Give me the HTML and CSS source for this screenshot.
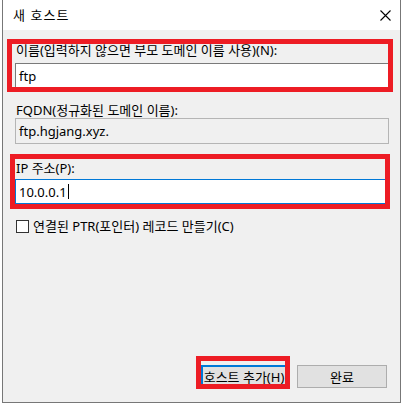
FILE: index.html
```html
<!DOCTYPE html>
<html lang="ko">
<head>
<meta charset="utf-8">
<title>새 호스트</title>
<link rel="stylesheet" href="styles.css">
</head>
<body>
<div class="window">
  <div class="titlebar">
    <span class="title">새 호스트</span>
    <svg class="close" width="11" height="11" viewBox="0 0 11 11"><path d="M0.5 0.5 L10.5 10.5 M10.5 0.5 L0.5 10.5" stroke="#000" stroke-width="1.1" fill="none"/></svg>
  </div>
  <div class="content">
    <div class="label first">이름(입력하지 않으면 부모 도메인 이름 사용)(N):</div>
    <div class="input">ftp</div>
    <div class="label fqdn">FQDN(정규화된 도메인 이름):</div>
    <div class="readonly">ftp.hgjang.xyz.</div>
    <div class="label ip">IP 주소(P):</div>
    <div class="input focused">10.0.0.1<span class="caret"></span></div>
    <div class="check-row"><span class="checkbox"></span><span class="check-label">연결된 PTR(포인터) 레코드 만들기(C)</span></div>
    <div class="buttons">
      <button class="btn default">호스트 추가(H)</button>
      <button class="btn done">완료</button>
    </div>
  </div>
  <div class="mark mark-name"></div>
  <div class="mark mark-ip"></div>
  <div class="mark mark-btn"></div>
</div>
</body>
</html>
```
FILE: styles.css
```css
html, body {
  margin: 0;
  padding: 0;
  background: #ffffff;
}
body {
  font-family: "Noto Sans", "Noto Sans CJK KR", sans-serif;
  font-size: 13px;
  color: #000;
}
.window {
  position: relative;
  margin-left: 2px;
  width: 397px;
  height: 402px;
  border-left: 1px solid #777;
  border-right: 1px solid #777;
  border-bottom: 1px solid #777;
  background: #f0f0f0;
  display: flex;
  flex-direction: column;
}
.titlebar {
  height: 30px;
  background: #fff;
  display: flex;
  align-items: center;
  padding-left: 10px;
  padding-right: 9px;
}
.title {
  flex: 1;
  font-family: "Noto Sans CJK KR", sans-serif;
  font-size: 13px;
  letter-spacing: 1px;
  line-height: 16px;
}
.close {
  display: block;
}
.content {
  flex: 1;
  display: flex;
  flex-direction: column;
  padding: 12px 11px 14px 12px;
}
.label {
  line-height: 16px;
  height: 16px;
  padding-left: 1px;
  white-space: nowrap;
}
.label.first { margin-bottom: 5px; }
.label.fqdn { margin-top: 14px; margin-bottom: 0; }
.label.ip { margin-top: 16px; margin-bottom: 3px; }
.input {
  box-sizing: border-box;
  height: 25px;
  background: #fff;
  border: 1px solid #7a7a7a;
  padding-left: 3px;
  display: flex;
  align-items: center;
  line-height: 16px;
}
.input.focused {
  border-color: #0078d7;
}
.caret {
  display: inline-block;
  width: 1px;
  height: 15px;
  background: #000;
  margin-left: 1px;
}
.readonly {
  box-sizing: border-box;
  height: 26px;
  border: 1px solid #b5b5b5;
  padding-left: 3px;
  display: flex;
  align-items: center;
  line-height: 16px;
}
.check-row {
  margin-top: 14px;
  display: flex;
  align-items: center;
  height: 16px;
  padding-left: 1px;
}
.checkbox {
  box-sizing: border-box;
  width: 13px;
  height: 13px;
  border: 1px solid #333;
  background: #fff;
  margin-right: 4px;
}
.check-label {
  line-height: 16px;
}
.buttons {
  margin-top: auto;
  display: flex;
  justify-content: flex-end;
  gap: 10px;
  padding-right: 2px;
}
.btn {
  box-sizing: border-box;
  height: 23px;
  font-family: "Noto Sans", "Noto Sans CJK KR", sans-serif;
  font-size: 13px;
  color: #000;
  background: #e1e1e1;
  border: 1px solid #adadad;
  padding: 0;
  margin: 0;
  white-space: nowrap;
  overflow: hidden;
}
.btn.default {
  width: 86px;
  border: 2px solid #0078d7;
}
.btn.done {
  width: 90px;
}
.mark {
  position: absolute;
  box-sizing: border-box;
  border: 5px solid #ed1c24;
  pointer-events: none;
}
.mark-name {
  left: 4px;
  top: 39px;
  width: 386px;
  height: 53px;
}
.mark-ip {
  left: 7px;
  top: 154px;
  width: 380px;
  height: 55px;
}
.mark-btn {
  left: 193px;
  top: 356px;
  width: 94px;
  height: 33px;
}
```
